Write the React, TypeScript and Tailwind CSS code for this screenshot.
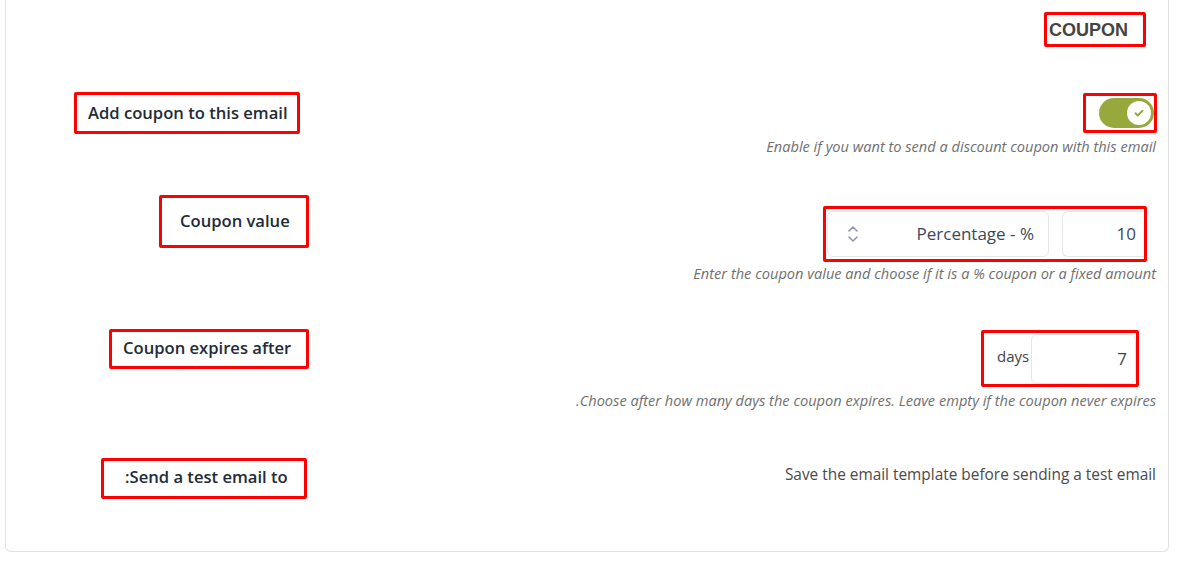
import React from 'react';

const font = { fontFamily: '"Open Sans", "Noto Sans", sans-serif' };

const Toggle: React.FC = () => (
  <div className="w-[55px] h-[30px] rounded-full bg-[#97a83c] flex items-center justify-end px-[3px]">
    <div className="w-[24px] h-[24px] rounded-full bg-white flex items-center justify-center">
      <svg width="12" height="12" viewBox="0 0 24 24" fill="none" stroke="#97a83c" strokeWidth="4" strokeLinecap="round" strokeLinejoin="round">
        <path d="M5 12.5l4.5 4.5L19 7.5" />
      </svg>
    </div>
  </div>
);

const UpDown: React.FC = () => (
  <svg width="14" height="20" viewBox="0 0 14 20" fill="none" stroke="#8f98aa" strokeWidth="1.6" strokeLinecap="round" strokeLinejoin="round">
    <path d="M3 7l4-4 4 4" />
    <path d="M3 13l4 4 4-4" />
  </svg>
);

const Help: React.FC<{ children: React.ReactNode }> = ({ children }) => (
  <p className="text-[14.6px] italic text-[#6f6f6f] leading-[18px] text-right">{children}</p>
);

export default function App() {
  return (
    <div className="bg-white w-[1184px] h-[561px]" style={font}>
      <div className="ml-[5px] w-[1164px] h-[552px] border border-t-0 border-[#e2e2e2] rounded-b-[6px]">
        {/* header */}
        <div className="flex justify-end pt-[12px] pr-[22px]">
          <div className="border-[3px] border-[#ff0000] rounded-[2px] h-[35px] w-[102px] flex items-center pl-[2px]">
            <span className="text-[18px] font-bold text-[#444] leading-none" style={{ fontFamily: '"Liberation Sans", Arial, sans-serif' }}>COUPON</span>
          </div>
        </div>

        {/* add coupon */}
        <div className="flex justify-between items-start mt-[45px] pr-[11px]">
          <div className="ml-[68px] border-[3px] border-[#ff0000] rounded-[2px] h-[42px] w-[226px] flex items-center pl-[11px]">
            <span className="text-[16.6px] font-semibold text-[#222b38]">Add coupon to this email</span>
          </div>
          <div className="flex flex-col items-end">
            <div className="mt-[1px] border-[3px] border-[#ff0000] rounded-[2px] h-[40px] w-[74px] flex items-center justify-end pr-[0px]">
              <Toggle />
            </div>
            <div className="mt-[4px] pr-[1px]">
              <Help>Enable if you want to send a discount coupon with this email</Help>
            </div>
          </div>
        </div>

        {/* coupon value */}
        <div className="flex justify-between items-start mt-[40px] pr-[11px]">
          <div className="ml-[153px] border-[3px] border-[#ff0000] rounded-[2px] h-[53px] w-[150px] flex items-center pl-[18px]">
            <span className="text-[16.6px] font-semibold text-[#222b38]">Coupon value</span>
          </div>
          <div className="flex flex-col items-end">
            <div className="mt-[11px] mr-[10px] border-[3px] border-[#ff0000] rounded-[2px] h-[56px] w-[324px] flex items-center gap-[13px] pl-[1px]">
              <div className="w-[222px] h-[46px] rounded-[6px] border border-[#e6e6e6] bg-white flex items-center justify-between pl-[18px] pr-[14px]">
                <UpDown />
                <span className="text-[17px] text-[#3c4859]">Percentage - %</span>
              </div>
              <div className="flex-1 h-[46px] rounded-l-[6px] border border-r-0 border-[#e6e6e6] bg-white flex items-center justify-end pr-[8px]">
                <span className="text-[17px] text-[#3c4859]">10</span>
              </div>
            </div>
            <div className="mt-[2px] pr-[1px]">
              <Help>Enter the coupon value and choose if it is a % coupon or a fixed amount</Help>
            </div>
          </div>
        </div>

        {/* expires */}
        <div className="flex justify-between items-start mt-[47px] pr-[11px]">
          <div className="ml-[103px] border-[3px] border-[#ff0000] rounded-[2px] h-[40px] w-[200px] flex items-center pl-[11px] pb-[1px]">
            <span className="text-[16.6px] font-semibold text-[#222b38]">Coupon expires after</span>
          </div>
          <div className="flex flex-col items-end">
            <div className="mt-[1px] mr-[18px] border-[3px] border-[#ff0000] rounded-[2px] h-[57px] w-[158px] flex items-center pl-[13px]">
              <span className="text-[15px] text-[#444] mb-[4px]">days</span>
              <div className="ml-[2px] flex-1 h-[50px] rounded-[6px] border border-[#e6e6e6] bg-white flex items-center justify-end pr-[8px]">
                <span className="text-[17px] text-[#3c4859]">7</span>
              </div>
            </div>
            <div className="mt-[4px] pr-[1px]">
              <Help>.Choose after how many days the coupon expires. Leave empty if the coupon never expires</Help>
            </div>
          </div>
        </div>

        {/* test email */}
        <div className="flex justify-between items-start mt-[49px] pr-[11px]">
          <div className="ml-[95px] border-[3px] border-[#ff0000] rounded-[2px] h-[41px] w-[206px] flex items-center pl-[21px] pb-[2px]">
            <span className="text-[16.6px] font-semibold text-[#222b38]">:Send a test email to</span>
          </div>
          <div className="mt-[4px] pr-[1px]">
            <span className="text-[15.4px] text-[#4a4a4a]">Save the email template before sending a test email</span>
          </div>
        </div>
      </div>
    </div>
  );
}
